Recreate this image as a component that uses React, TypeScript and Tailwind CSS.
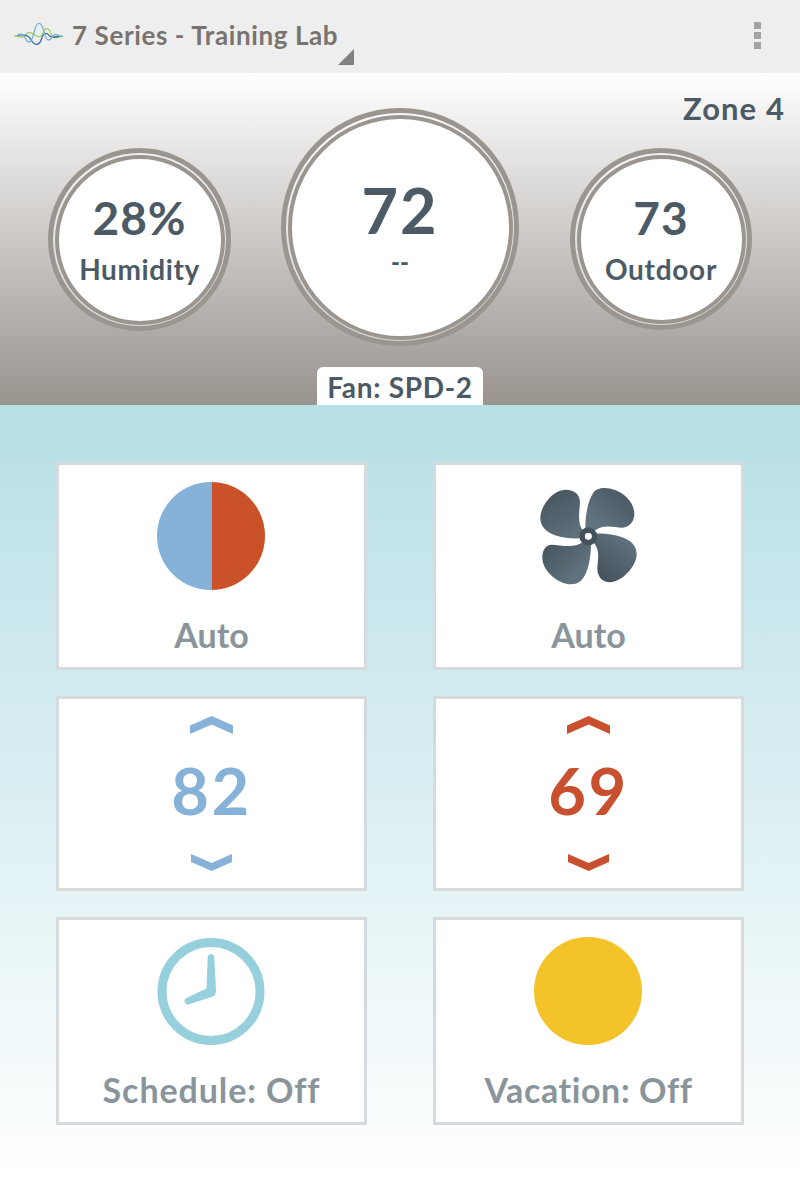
import React, { useState } from 'react';

const BRAND_FONT = "font-['Lato','Open_Sans',sans-serif]";

const WaveLogo: React.FC = () => (
  <svg viewBox="42 64 147 70" className="w-[49px] h-[23.3px] shrink-0" fill="none" strokeWidth="4">
    <path stroke="#a6cf6c" d="M42 106 C56 106 62 112 70 108 C78 104 80 95 89 95 C100 95 103 108 118 108 C131 108 128 84 140 84 C152 84 151 100 157 106 C163 114 172 112 189 106" />
    <path stroke="#3f7198" d="M52 106 C60 100 68 103 76 104 C94 104 92 131 110 131 C128 131 122 98 137 98 C148 98 148 112 160 110 C168 109 172 106 180 107" />
    <path stroke="#79b2de" d="M52 104 C60 99 68 100 73 107 C78 115 79 124 88 124 C103 124 100 68 117 68 C134 68 130 118 146 118 C157 118 156 102 166 101 C174 101 176 107 189 106" />
  </svg>
);

const FanIcon: React.FC = () => (
  <svg viewBox="60 36 294 294" className="size-[98px]">
    <defs>
      <linearGradient id="bladeA" x1="0" y1="1" x2="1" y2="0">
        <stop offset="0.2" stopColor="#5f7380" />
        <stop offset="1" stopColor="#46535c" />
      </linearGradient>
      <linearGradient id="bladeB" x1="0.2" y1="0" x2="0.7" y2="1">
        <stop offset="0" stopColor="#47545d" />
        <stop offset="1" stopColor="#5f717d" />
      </linearGradient>
      <linearGradient id="bladeC" x1="0" y1="0" x2="1" y2="0.8">
        <stop offset="0" stopColor="#45525b" />
        <stop offset="0.8" stopColor="#5f727e" />
      </linearGradient>
      <linearGradient id="bladeD" x1="0.9" y1="0.1" x2="0.3" y2="1">
        <stop offset="0.1" stopColor="#5e717e" />
        <stop offset="1" stopColor="#45525b" />
      </linearGradient>
    </defs>
    <path fill="url(#bladeA)" d="M196 162 C196 120 203 80 219 55 C230 36 260 36 285 45 C317 57 343 85 343 117 C343 142 325 158 305 158 C285 158 252 146 226 166 Z" />
    <path fill="url(#bladeB)" d="M188 166 C172 142 178 110 180 85 C181 60 165 44 137 44 C98 44 61 93 61 130 C61 155 80 172 105 181 C130 190 158 191 184 190 Z" />
    <path fill="url(#bladeC)" d="M188 202 C160 222 120 209 95 209 C76 210 66 226 67 250 C68 285 107 321 142 327 C170 331 185 320 195 300 C208 274 213 240 213 204 Z" />
    <path fill="url(#bladeD)" d="M220 202 C243 225 232 260 232 283 C233 305 246 322 270 322 C304 322 350 275 350 238 C350 210 330 195 305 186 C280 178 252 174 224 176 Z" />
    <circle cx="205" cy="184" r="18.5" fill="none" stroke="#45525b" strokeWidth="17" />
    <circle cx="205" cy="184" r="10" fill="#fff" />
  </svg>
);

const ClockIcon: React.FC = () => (
  <svg viewBox="0 0 108 108" className="-ml-px size-[108px]">
    <circle cx="54" cy="54.5" r="49" fill="none" stroke="#97d0dd" strokeWidth="9" />
    <path fill="#97d0dd" d="M50.7 20 C51 16 57 16 57.3 20 L59 54 C59 57.500 57.500 59 54.500 60 L32 67.200 C28 68.500 25.500 63 29.500 61 L49.500 51.500 Z" />
  </svg>
);

const AutoModeIcon: React.FC = () => (
  <div className="-ml-px flex size-[108px] overflow-hidden rounded-full">
    <div className="w-[54.500px] bg-[#86b1d8]" />
    <div className="flex-1 bg-[#ca5128]" />
  </div>
);

interface DialProps {
  size: string;
  children: React.ReactNode;
}

const Dial: React.FC<DialProps> = ({ size, children }) => (
  <div className={`rounded-full border-[5.500px] border-[#9b9590] bg-white/50 p-[1.500px] ${size}`}>
    <div className="flex size-full flex-col items-center rounded-full border-4 border-[#9b9590] bg-white text-[#4c5a65]">
      {children}
    </div>
  </div>
);

interface TileProps {
  label: string;
  children: React.ReactNode;
  labelClass?: string;
}

const Tile: React.FC<TileProps> = ({ label, children, labelClass = '' }) => (
  <button className="flex h-[208px] flex-col items-center border-[3px] border-[#d7dadd] bg-white pt-[17px]">
    {children}
    <span className={`mt-[28px] whitespace-nowrap text-[34px] leading-none font-bold text-[#89959b] ${labelClass}`}>
      {label}
    </span>
  </button>
);

interface SetpointProps {
  value: number;
  color: string;
  onChange: (value: number) => void;
}

const Setpoint: React.FC<SetpointProps> = ({ value, color, onChange }) => (
  <div className={`flex h-[195px] flex-col items-center border-[3px] border-[#d7dadd] bg-white pt-[17px] ${color}`}>
    <button onClick={() => onChange(value + 1)} aria-label="Raise">
      <svg viewBox="0 0 43 18" className="block h-[18px] w-[43px] fill-current">
        <path d="M0 9.500 L21.700 0 L43 9.500 V18 L21.700 8.500 L0 18 Z" />
      </svg>
    </button>
    <span className="mt-[24px] text-[65px] leading-none font-bold tracking-[2.500px]">{value}</span>
    <button className="mt-[31px]" onClick={() => onChange(value - 1)} aria-label="Lower">
      <svg viewBox="0 0 41 17" className="block h-[17px] w-[41px] fill-current">
        <path d="M0 0 L20.700 9 L41 0 V8 L20.700 17 L0 8 Z" />
      </svg>
    </button>
  </div>
);

const App: React.FC = () => {
  const [cool, setCool] = useState(82);
  const [heat, setHeat] = useState(69);

  return (
    <div className={`flex h-[1179px] w-[800px] flex-col overflow-hidden ${BRAND_FONT}`}>
      {/* Action bar */}
      <header className="flex h-[73px] shrink-0 items-start bg-[#eeeeee] pl-[14px]">
        <div className="mt-[22px]">
          <WaveLogo />
        </div>
        <h1 className="mt-[22px] ml-[9px] w-[266px] whitespace-nowrap text-[26px] leading-none font-bold tracking-[0.600px] text-[#7a746f]">
          7 Series - Training Lab
        </h1>
        <svg viewBox="0 0 16 16" className="mt-[49px] size-4">
          <path d="M16 0 V16 H0 Z" fill="#808080" />
        </svg>
        <button className="mt-[22px] mr-[39px] ml-auto flex flex-col gap-[3px]" aria-label="Menu">
          <span className="size-[7px] bg-[#a3a3a3]" />
          <span className="size-[7px] bg-[#a3a3a3]" />
          <span className="size-[7px] bg-[#a3a3a3]" />
        </button>
      </header>

      {/* Current readings */}
      <section className="relative flex h-[332px] shrink-0 items-start bg-linear-to-b from-white to-[#9a948f] pl-[48px]">
        <div className="mt-[75px]">
          <Dial size="size-[183px]">
            <span className="mt-[36px] text-[46px] leading-none font-bold tracking-[1px]">28%</span>
            <span className="mt-[14px] text-[28px] leading-none font-bold tracking-[0.600px]">Humidity</span>
          </Dial>
        </div>
        <div className="mt-[35px] ml-[50px]">
          <Dial size="size-[238px]">
            <span className="mt-[59px] text-[63px] leading-none font-bold tracking-[2px]">72</span>
            <span className="mt-[9px] text-[24px] leading-none font-black">--</span>
          </Dial>
        </div>
        <div className="mt-[75px] ml-[51px]">
          <Dial size="size-[182px]">
            <span className="mt-[36px] text-[46px] leading-none font-bold tracking-[1px]">73</span>
            <span className="mt-[14px] text-[28px] leading-none font-bold tracking-[0.700px]">Outdoor</span>
          </Dial>
        </div>
        <span className="absolute top-[20px] right-[15px] text-[31px] leading-none font-bold tracking-[1.100px] text-[#4c5a65]">
          Zone 4
        </span>
        <div className="absolute bottom-0 left-[317px] flex h-[38px] w-[166px] justify-center rounded-t-[6px] bg-white pt-[6px] whitespace-nowrap text-[28px] leading-none font-bold tracking-[0.700px] text-[#4c5a65]">
          Fan: SPD-2
        </div>
      </section>

      {/* Controls */}
      <main className="grid flex-1 grid-cols-[311px_311px] content-start justify-center gap-x-[66px] gap-y-[26px] bg-linear-to-b from-[#b6dfe6] to-white pt-[57px]">
        <Tile label="Auto">
          <AutoModeIcon />
        </Tile>
        <Tile label="Auto">
          <div className="flex h-[108px] items-center">
            <FanIcon />
          </div>
        </Tile>
        <Setpoint value={cool} color="text-[#86b1d8]" onChange={setCool} />
        <Setpoint value={heat} color="text-[#c8502f]" onChange={setHeat} />
        <Tile label="Schedule: Off" labelClass="tracking-[0.900px]">
          <ClockIcon />
        </Tile>
        <Tile label="Vacation: Off" labelClass="tracking-[0.600px]">
          <div className="-ml-px size-[108px] rounded-full bg-[#f4c32a]" />
        </Tile>
      </main>
    </div>
  );
};

export default App;
